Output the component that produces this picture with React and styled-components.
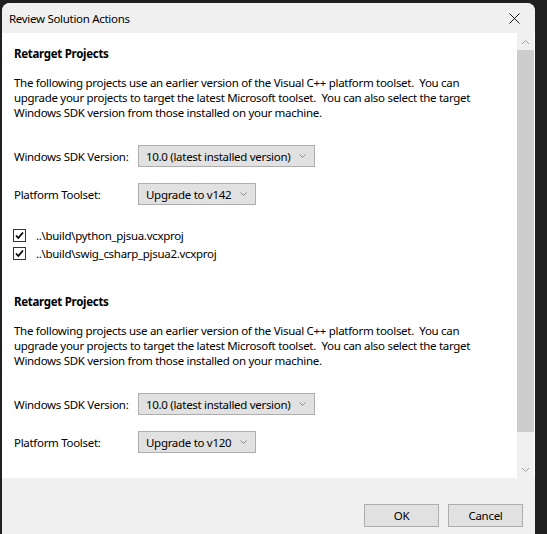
import styled, { createGlobalStyle } from "styled-components";

const GlobalStyle = createGlobalStyle`
  html, body {
    margin: 0;
    padding: 0;
    background: #202020;
    overflow: hidden;
  }
  body {
    font-family: "Segoe UI", "Noto Sans", sans-serif;
    font-size: 11.5px;
    letter-spacing: -0.3px;
    color: #000;
  }
`;

const Window = styled.div`
  margin: 3px 0 0 2px;
  width: 533px;
  height: 531px;
  display: flex;
  flex-direction: column;
  background: #f0f0f0;
  border-radius: 8px 8px 0 0;
  overflow: hidden;
`;

const TitleBar = styled.div`
  height: 30px;
  flex-shrink: 0;
  display: flex;
  align-items: center;
  justify-content: space-between;
  padding-left: 7px;
  background: #f0f0f0;
`;

const Title = styled.span`
  font-size: 11.5px;
`;

const CloseButton = styled.div`
  width: 46px;
  height: 30px;
  display: flex;
  align-items: center;
  justify-content: center;
  margin-right: -2px;
`;

const Body = styled.div`
  height: 445px;
  flex-shrink: 0;
  display: flex;
  background: #fff;
`;

const Content = styled.div`
  flex: 1;
  padding: 13px 12px 0 12px;
  overflow: hidden;
`;

const Section = styled.section`
  & + & {
    margin-top: 34px;
  }
`;

const Heading = styled.h2`
  margin: 0;
  font-size: 11.5px;
  font-weight: 700;
  line-height: 16px;
`;

const Paragraph = styled.p`
  margin: 13px 0 0 0;
  line-height: 15px;
  white-space: pre;
`;

const FieldRow = styled.div`
  display: flex;
  align-items: center;
  margin-top: ${(p) => p.$gap}px;
`;

const Label = styled.span`
  width: 124px;
  flex-shrink: 0;
`;

const Select = styled.div`
  height: ${(p) => p.$h}px;
  box-sizing: border-box;
  display: inline-flex;
  align-items: center;
  gap: 9px;
  padding: 0 8px 0 7px;
  background: #e1e1e1;
  border: 1px solid #adadad;
`;

const CheckList = styled.div`
  margin-top: 24px;
  display: flex;
  flex-direction: column;
  gap: 5px;
`;

const CheckRow = styled.label`
  display: flex;
  align-items: center;
  gap: 10px;
  height: 13px;
  margin-left: -1px;
`;

const Box = styled.span`
  width: 13px;
  height: 13px;
  box-sizing: border-box;
  border: 1px solid #333;
  background: #fff;
  display: flex;
  align-items: center;
  justify-content: center;
`;

const ScrollBar = styled.div`
  width: 17px;
  flex-shrink: 0;
  margin-right: 1px;
  background: #f0f0f0;
  display: flex;
  flex-direction: column;
`;

const Arrow = styled.div`
  height: 17px;
  flex-shrink: 0;
  display: flex;
  align-items: center;
  justify-content: center;
`;

const Thumb = styled.div`
  height: 382px;
  flex-shrink: 0;
  background: #cdcdcd;
`;

const Track = styled.div`
  flex: 1;
`;

const Footer = styled.div`
  flex: 1;
  display: flex;
  justify-content: flex-end;
  align-items: flex-start;
  gap: 9px;
  padding: 26px 12px 0 0;
  background: #f0f0f0;
`;

const Button = styled.button`
  width: 75px;
  height: 23px;
  box-sizing: border-box;
  border: 1px solid #adadad;
  background: #e1e1e1;
  font-family: inherit;
  font-size: 11.5px;
  letter-spacing: inherit;
  color: #000;
  padding: 0;
`;

const Chevron = ({ up }) => (
  <svg width="9" height="6" viewBox="0 0 9 6">
    <path
      d={up ? "M1 5 L4.5 1.5 L8 5" : "M1 1 L4.5 4.5 L8 1"}
      fill="none"
      stroke="#a0a0a0"
      strokeWidth="1"
    />
  </svg>
);

const SmallChevron = () => (
  <svg width="7" height="4" viewBox="0 0 7 4">
    <path d="M0.5 0.5 L3.5 3.5 L6.5 0.5" fill="none" stroke="#8a8a8a" strokeWidth="1" />
  </svg>
);

const Check = () => (
  <svg width="11" height="11" viewBox="0 0 11 11">
    <path d="M2 5.5 L4.3 8 L9 2.5" fill="none" stroke="#000" strokeWidth="1.8" />
  </svg>
);

const text =
  "The following projects use an earlier version of the Visual C++ platform toolset.  You can\nupgrade your projects to target the latest Microsoft toolset.  You can also select the target\nWindows SDK version from those installed on your machine.";

const RetargetSection = ({ toolset, projects }) => (
  <Section>
    <Heading>Retarget Projects</Heading>
    <Paragraph>{text}</Paragraph>
    <FieldRow $gap={25}>
      <Label>Windows SDK Version:</Label>
      <Select $h={22}>
        10.0 (latest installed version)
        <SmallChevron />
      </Select>
    </FieldRow>
    <FieldRow $gap={16}>
      <Label>Platform Toolset:</Label>
      <Select $h={22}>
        {toolset}
        <SmallChevron />
      </Select>
    </FieldRow>
    {projects && (
      <CheckList>
        {projects.map((p) => (
          <CheckRow key={p}>
            <Box>
              <Check />
            </Box>
            {p}
          </CheckRow>
        ))}
      </CheckList>
    )}
  </Section>
);

export default function App() {
  return (
    <>
      <GlobalStyle />
      <Window>
        <TitleBar>
          <Title>Review Solution Actions</Title>
          <CloseButton>
            <svg width="11" height="11" viewBox="0 0 11 11">
              <path d="M0.5 0.5 L10.5 10.5 M10.5 0.5 L0.5 10.5" stroke="#1a1a1a" strokeWidth="1" />
            </svg>
          </CloseButton>
        </TitleBar>
        <Body>
          <Content>
            <RetargetSection
              toolset="Upgrade to v142"
              projects={[
                "..\\build\\python_pjsua.vcxproj",
                "..\\build\\swig_csharp_pjsua2.vcxproj",
              ]}
            />
            <RetargetSection toolset="Upgrade to v120" />
          </Content>
          <ScrollBar>
            <Arrow>
              <Chevron up />
            </Arrow>
            <Thumb />
            <Track />
            <Arrow>
              <Chevron />
            </Arrow>
          </ScrollBar>
        </Body>
        <Footer>
          <Button>OK</Button>
          <Button>Cancel</Button>
        </Footer>
      </Window>
    </>
  );
}
